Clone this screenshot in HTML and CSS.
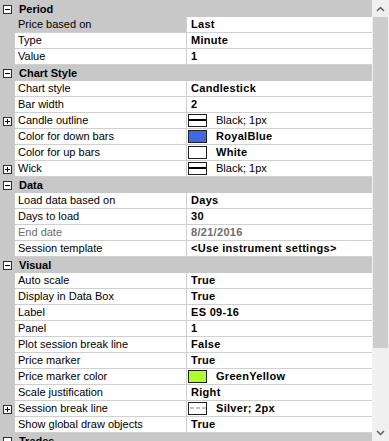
FILE: index.html
```html
<!DOCTYPE html>
<html lang="en">

<head>
    <meta charset="UTF-8">
    <title>Properties</title>
    <link rel="stylesheet" href="styles.css">
</head>

<body>
    <div class="panel">
        <div class="grid">
            <div class="cat"><span class="toggle minus"></span>Period</div>
            <div class="row sel"><span class="gutter"></span><span class="name">Price based on</span><span class="val">Last</span></div>
            <div class="row"><span class="gutter"></span><span class="name">Type</span><span class="val">Minute</span></div>
            <div class="row"><span class="gutter"></span><span class="name">Value</span><span class="val">1</span></div>

            <div class="cat"><span class="toggle minus"></span>Chart Style</div>
            <div class="row"><span class="gutter"></span><span class="name">Chart style</span><span class="val">Candlestick</span></div>
            <div class="row"><span class="gutter"></span><span class="name">Bar width</span><span class="val">2</span></div>
            <div class="row"><span class="gutter"><span class="toggle plus"></span></span><span class="name">Candle outline</span><span class="val swatch-val"><span class="swatch line"></span><span class="plain">Black; 1px</span></span></div>
            <div class="row"><span class="gutter"></span><span class="name">Color for down bars</span><span class="val swatch-val"><span class="swatch" style="background: #4169e1;"></span>RoyalBlue</span></div>
            <div class="row"><span class="gutter"></span><span class="name">Color for up bars</span><span class="val swatch-val"><span class="swatch" style="background: #ffffff;"></span>White</span></div>
            <div class="row"><span class="gutter"><span class="toggle plus"></span></span><span class="name">Wick</span><span class="val swatch-val"><span class="swatch line"></span><span class="plain">Black; 1px</span></span></div>

            <div class="cat"><span class="toggle minus"></span>Data</div>
            <div class="row"><span class="gutter"></span><span class="name">Load data based on</span><span class="val">Days</span></div>
            <div class="row"><span class="gutter"></span><span class="name">Days to load</span><span class="val">30</span></div>
            <div class="row dim"><span class="gutter"></span><span class="name">End date</span><span class="val">8/21/2016</span></div>
            <div class="row"><span class="gutter"></span><span class="name">Session template</span><span class="val">&lt;Use instrument settings&gt;</span></div>

            <div class="cat"><span class="toggle minus"></span>Visual</div>
            <div class="row"><span class="gutter"></span><span class="name">Auto scale</span><span class="val">True</span></div>
            <div class="row"><span class="gutter"></span><span class="name">Display in Data Box</span><span class="val">True</span></div>
            <div class="row"><span class="gutter"></span><span class="name">Label</span><span class="val">ES 09-16</span></div>
            <div class="row"><span class="gutter"></span><span class="name">Panel</span><span class="val">1</span></div>
            <div class="row"><span class="gutter"></span><span class="name">Plot session break line</span><span class="val">False</span></div>
            <div class="row"><span class="gutter"></span><span class="name">Price marker</span><span class="val">True</span></div>
            <div class="row"><span class="gutter"></span><span class="name">Price marker color</span><span class="val swatch-val"><span class="swatch" style="background: #adff2f;"></span>GreenYellow</span></div>
            <div class="row"><span class="gutter"></span><span class="name">Scale justification</span><span class="val">Right</span></div>
            <div class="row"><span class="gutter"><span class="toggle plus"></span></span><span class="name">Session break line</span><span class="val swatch-val"><span class="swatch dashed"></span>Silver; 2px</span></div>
            <div class="row"><span class="gutter"></span><span class="name">Show global draw objects</span><span class="val">True</span></div>

            <div class="cat"><span class="toggle minus"></span>Trades</div>
        </div>

        <div class="scroll">
            <div class="arrow">
                <svg width="9" height="6" viewBox="0 0 9 6"><polyline points="1,5 4.5,1.5 8,5" fill="none" stroke="#606060" stroke-width="1.5" /></svg>
            </div>
            <div class="thumb"></div>
            <div class="track"></div>
            <div class="arrow">
                <svg width="9" height="6" viewBox="0 0 9 6"><polyline points="1,1 4.5,4.5 8,1" fill="none" stroke="#606060" stroke-width="1.5" /></svg>
            </div>
        </div>
    </div>
</body>

</html>
```

FILE: styles.css
```css
body {
    margin: 0;
    font-family: "Liberation Sans", Arial, sans-serif;
    font-size: 11px;
    color: #000;
    background-color: #c8c8c8;
}

.panel {
    display: flex;
    height: 441px;
    overflow: hidden;
}

.grid {
    flex: 1;
    padding-top: 1px;
    background-color: #c8c8c8;
}

/* Category header */
.cat {
    display: flex;
    align-items: center;
    height: 16px;
    font-weight: bold;
    white-space: nowrap;
}

.toggle {
    position: relative;
    display: inline-block;
    box-sizing: border-box;
    width: 9px;
    height: 9px;
    border: 1px solid #303030;
    background-color: #fff;
}

.cat .toggle {
    margin: 0 7px 0 3px;
}

.toggle::before,
.toggle::after {
    content: '';
    position: absolute;
    background-color: #000;
}

.toggle::before {
    left: 1px;
    top: 3px;
    width: 5px;
    height: 1px;
}

.toggle.plus::after {
    left: 3px;
    top: 1px;
    width: 1px;
    height: 5px;
}

/* Property rows */
.row {
    display: grid;
    grid-template-columns: 15px 171px 1fr;
    height: 16px;
}

.gutter {
    display: flex;
    align-items: center;
    padding-left: 3px;
}

.name,
.val {
    background-color: #fff;
    border-bottom: 1px solid #d0d0d0;
    line-height: 15px;
    white-space: nowrap;
    overflow: hidden;
}

.name {
    padding-left: 3px;
}

.val {
    border-left: 1px solid #d0d0d0;
    padding-left: 4px;
    font-weight: bold;
    letter-spacing: 0.3px;
}

.row.sel .name {
    background-color: #c8c8c8;
}

.row.dim .name,
.row.dim .val {
    color: #6d6d6d;
}

/* Colour and stroke swatches */
.swatch-val {
    display: flex;
    align-items: center;
    padding-left: 1px;
}

.swatch {
    position: relative;
    box-sizing: border-box;
    width: 19px;
    height: 13px;
    margin-right: 9px;
    border: 1px solid #202020;
    background-color: #fff;
}

.swatch.line::after,
.swatch.dashed::after {
    content: '';
    position: absolute;
    left: 0;
    right: 0;
    top: 4px;
    height: 2px;
}

.swatch.line::after {
    background-color: #000;
}

.swatch.dashed::after {
    left: 1px;
    background: repeating-linear-gradient(90deg, #c0c0c0 0 4px, transparent 4px 6px);
}

.plain {
    font-weight: normal;
    letter-spacing: 0;
}

/* Scrollbar */
.scroll {
    width: 17px;
    display: flex;
    flex-direction: column;
    background-color: #f0f0f0;
}

.arrow {
    height: 17px;
    display: flex;
    align-items: center;
    justify-content: center;
}

.thumb {
    height: 331px;
    margin: 0 1px;
    background-color: #cdcdcd;
}

.track {
    flex: 1;
}
```
